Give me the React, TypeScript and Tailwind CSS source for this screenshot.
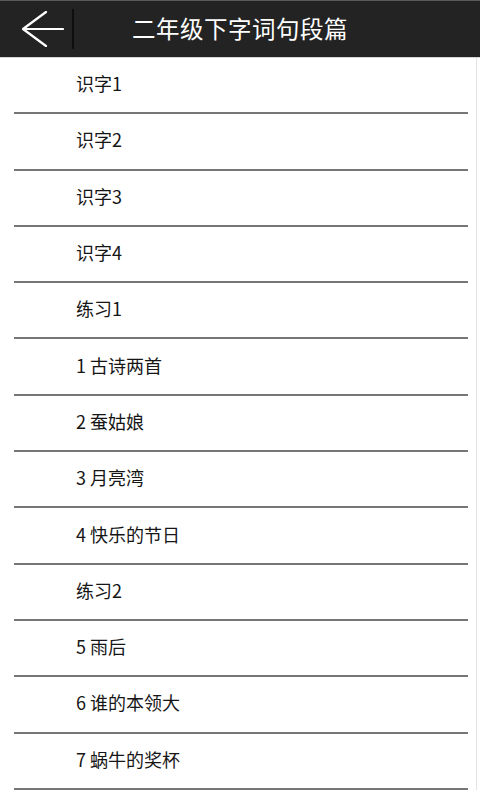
import React from "react";

const items = [
  "识字1",
  "识字2",
  "识字3",
  "识字4",
  "练习1",
  "1 古诗两首",
  "2 蚕姑娘",
  "3 月亮湾",
  "4 快乐的节日",
  "练习2",
  "5 雨后",
  "6 谁的本领大",
  "7 蜗牛的奖杯",
];

const font = { fontFamily: '"Noto Sans CJK SC", "Noto Sans", Roboto, sans-serif' };

export default function App() {
  return (
    <div className="w-[480px] h-[800px] bg-white overflow-hidden" style={font}>
      <header className="relative h-[57px] bg-[#232323] border-t border-[#5a5a5a] flex items-center">
        <button className="w-[72px] h-full flex items-center justify-center pl-[14px]">
          <svg width="42" height="36" viewBox="0 0 42 36" fill="none">
            <path d="M1 18 H41 M24 1 L1 18 L24 35" stroke="#fff" strokeWidth="2.2" strokeLinecap="round" strokeLinejoin="round" />
          </svg>
        </button>
        <div className="w-[2px] h-[40px] bg-[#0e0e0e]" />
        <h1 className="absolute left-0 right-0 text-center text-white text-[23.5px] leading-none tracking-[0.5px] pointer-events-none">
          二年级下字词句段篇
        </h1>
      </header>
      <div className="h-px bg-[#d6d6d6]" />
      <ul className="w-[477px] border-r border-[#e2e2e2]">
        {items.map((t) => (
          <li key={t} className="h-[56.3px] pl-[14px] pr-[8px]">
            <div className="h-full flex flex-col">
              <div className="flex-1 flex items-center pl-[62px] pb-[3px] text-[18px] text-[#161616]">{t}</div>
              <div className="h-[2px] bg-[#767676]" />
            </div>
          </li>
        ))}
      </ul>
    </div>
  );
}
